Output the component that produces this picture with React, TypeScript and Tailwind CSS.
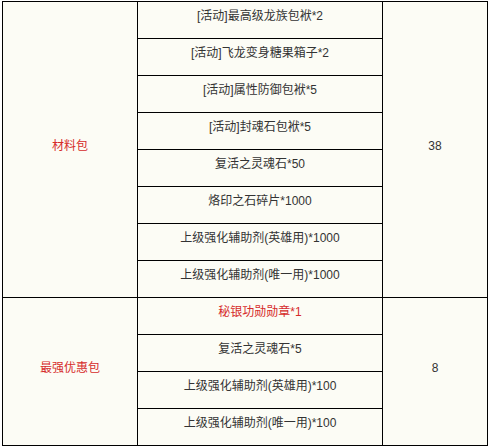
const items: { text: string; red?: boolean }[] = [
  { text: "[活动]最高级龙族包袱*2" },
  { text: "[活动]飞龙变身糖果箱子*2" },
  { text: "[活动]属性防御包袱*5" },
  { text: "[活动]封魂石包袱*5" },
  { text: "复活之灵魂石*50" },
  { text: "烙印之石碎片*1000" },
  { text: "上级强化辅助剂(英雄用)*1000" },
  { text: "上级强化辅助剂(唯一用)*1000" },
  { text: "秘银功勋勋章*1", red: true },
  { text: "复活之灵魂石*5" },
  { text: "上级强化辅助剂(英雄用)*100" },
  { text: "上级强化辅助剂(唯一用)*100" },
];

const cell =
  "flex items-center justify-center border-r border-b border-black pb-2 leading-none";

export default function App() {
  return (
    <div className="min-h-screen bg-white pt-px pl-[2px]">
      <div
        className="grid w-max grid-cols-[135px_245px_105px] grid-rows-[repeat(12,37px)] border-l border-t border-black bg-[#fcfcf5] text-[12px] text-[#333]"
        style={{ fontFamily: '"Liberation Sans", "Noto Sans CJK SC", sans-serif' }}
      >
        <div className={`${cell} col-start-1 row-start-1 row-span-8 text-[#d62b2b]`}>材料包</div>
        <div className={`${cell} col-start-3 row-start-1 row-span-8`}>38</div>
        <div className={`${cell} col-start-1 row-start-9 row-span-4 text-[#d62b2b]`}>最强优惠包</div>
        <div className={`${cell} col-start-3 row-start-9 row-span-4`}>8</div>
        {items.map((it, i) => (
          <div
            key={i}
            className={`${cell} col-start-2 ${it.red ? "text-[#d62b2b]" : ""}`}
            style={{ gridRowStart: i + 1 }}
          >
            {it.text}
          </div>
        ))}
      </div>
    </div>
  );
}
